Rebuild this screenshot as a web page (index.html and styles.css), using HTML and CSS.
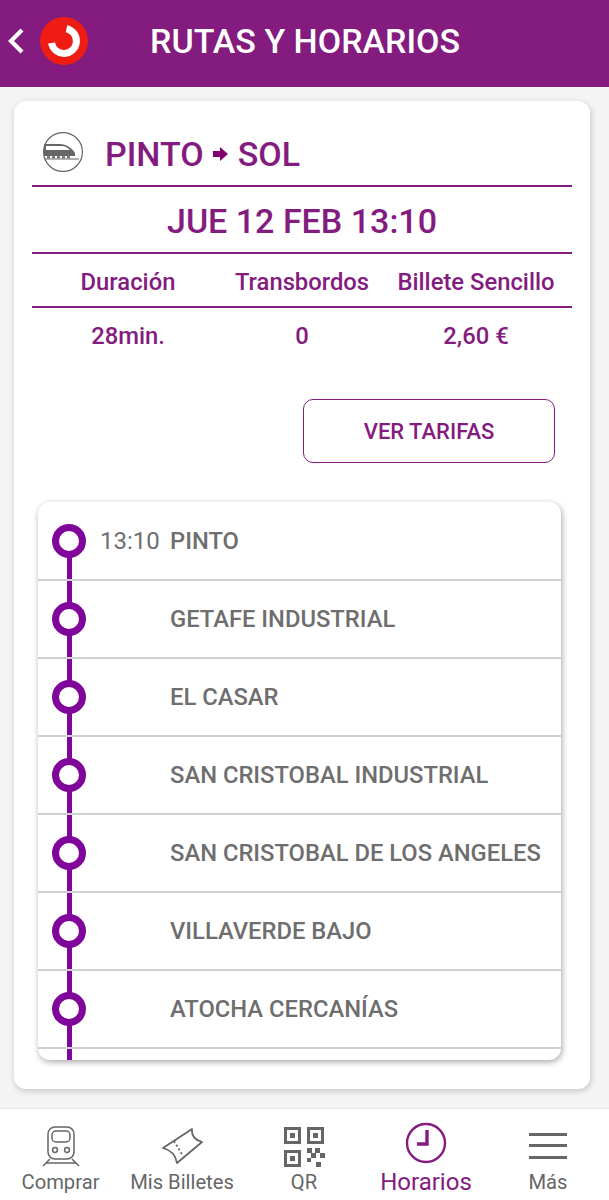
FILE: index.html
```html
<!DOCTYPE html>
<html lang="es">
<head>
  <meta charset="UTF-8">
  <meta name="viewport" content="width=device-width, initial-scale=1.0">
  <title>Rutas y horarios</title>
  <link rel="stylesheet" href="styles.css">
</head>
<body>
  <header class="top-bar">
    <svg class="back-icon" width="17" height="28" viewBox="0 0 17 28"><path d="M15 3 L4 14 L15 25" fill="none" stroke="#fff" stroke-width="4.2"/></svg>
    <svg class="logo" width="48" height="48" viewBox="0 0 48 48">
      <circle cx="24" cy="24" r="24" fill="#ee1c12"/>
      <path d="M26.5 11.7 A12.5 12.5 0 1 1 11.6 26" fill="none" stroke="#fff" stroke-width="7"/>
    </svg>
    <h1 class="page-title">RUTAS Y HORARIOS</h1>
  </header>

  <main class="content">
    <section class="route-card">
      <div class="route-head">
        <svg class="route-icon" width="40" height="40" viewBox="0 0 40 40">
          <circle cx="20" cy="20" r="19.4" fill="#fff" stroke="#666" stroke-width="1.2"/>
          <path d="M1 12 H17 C23 12 29 16 32 21 V24 H1 Z" fill="#666"/>
          <path d="M3 14 H19 C22 14 25 16 27 18 H3 Z" fill="#fff"/>
          <path d="M2 27 H36" stroke="#666" stroke-width="1.2"/>
          <path d="M4 25.2 H27" stroke="#666" stroke-width="2" stroke-dasharray="3 2"/>
        </svg>
        <h2 class="route-name">PINTO
          <svg class="route-arrow" width="16" height="14" viewBox="0 0 16 14"><path d="M0 4 H7 V0 L15 7 L7 14 V10 H0 Z" fill="#80006f"/></svg>
          SOL</h2>
      </div>
      <div class="route-date">JUE 12 FEB 13:10</div>
      <div class="info-grid info-labels">
        <span>Duración</span>
        <span>Transbordos</span>
        <span>Billete Sencillo</span>
      </div>
      <div class="info-grid info-values">
        <span>28min.</span>
        <span>0</span>
        <span>2,60 €</span>
      </div>
      <div class="fare-row">
        <button class="fare-button">VER TARIFAS</button>
      </div>

      <ul class="stops">
        <li class="stop"><span class="stop-mark"></span><span class="stop-time">13:10</span><span class="stop-name">PINTO</span></li>
        <li class="stop"><span class="stop-mark"></span><span class="stop-time"></span><span class="stop-name">GETAFE INDUSTRIAL</span></li>
        <li class="stop"><span class="stop-mark"></span><span class="stop-time"></span><span class="stop-name">EL CASAR</span></li>
        <li class="stop"><span class="stop-mark"></span><span class="stop-time"></span><span class="stop-name">SAN CRISTOBAL INDUSTRIAL</span></li>
        <li class="stop"><span class="stop-mark"></span><span class="stop-time"></span><span class="stop-name">SAN CRISTOBAL DE LOS ANGELES</span></li>
        <li class="stop"><span class="stop-mark"></span><span class="stop-time"></span><span class="stop-name">VILLAVERDE BAJO</span></li>
        <li class="stop"><span class="stop-mark"></span><span class="stop-time"></span><span class="stop-name">ATOCHA CERCANÍAS</span></li>
      </ul>
    </section>
  </main>

  <nav class="tab-bar">
    <a class="tab">
      <svg width="40" height="42" viewBox="0 0 40 42" fill="none" stroke="#666" stroke-width="1.5">
        <rect x="7" y="1" width="26" height="32" rx="7"/>
        <rect x="11" y="5" width="18" height="11" rx="4"/>
        <circle cx="14" cy="24" r="2.4"/>
        <circle cx="26" cy="24" r="2.4"/>
        <path d="M9 33 L2 40 M31 33 L38 40 M5 37 H35"/>
      </svg>
      <span>Comprar</span>
    </a>
    <a class="tab">
      <svg width="42" height="42" viewBox="0 0 42 42" fill="none" stroke="#666" stroke-width="1.8" stroke-linejoin="round">
        <path d="M2 22 L31 3 Q30 13 41 16 L16 37 Q14 25 2 22 Z"/>
        <path d="M13 15 L22 30" stroke-dasharray="2 2.4"/>
      </svg>
      <span>Mis Billetes</span>
    </a>
    <a class="tab">
      <svg width="42" height="42" viewBox="0 0 42 42" fill="#666">
        <path fill-rule="evenodd" d="M1 1 H18 V18 H1 Z M4 4 V15 H15 V4 Z M7 7 H12 V12 H7 Z"/>
        <path fill-rule="evenodd" d="M24 1 H41 V18 H24 Z M27 4 V15 H38 V4 Z M30 7 H35 V12 H30 Z"/>
        <path fill-rule="evenodd" d="M1 24 H18 V41 H1 Z M4 27 V38 H15 V27 Z M7 30 H12 V35 H7 Z"/>
        <path d="M24 22 H29 V27 H24 Z M32 22 H37 V27 H32 Z M28 27 H33 V32 H28 Z M37 27 H42 V32 H37 Z M24 32 H28 V36 H24 Z M33 36 H38 V41 H33 Z"/>
      </svg>
      <span>QR</span>
    </a>
    <a class="tab tab-active">
      <svg width="42" height="42" viewBox="0 0 42 42" fill="none" stroke="#841b7e" stroke-width="2.4">
        <circle cx="21" cy="21" r="19"/>
        <path d="M22 8 V22 H12" stroke-width="3.4"/>
      </svg>
      <span>Horarios</span>
    </a>
    <a class="tab">
      <svg width="40" height="42" viewBox="0 0 40 42" fill="#666">
        <rect x="1" y="7" width="38" height="3"/>
        <rect x="1" y="18" width="38" height="3"/>
        <rect x="1" y="30" width="38" height="3"/>
      </svg>
      <span>Más</span>
    </a>
  </nav>
</body>
</html>
```

FILE: styles.css
```css
* {
  box-sizing: border-box;
}

body {
  margin: 0;
  height: 1200px;
  overflow: hidden;
  display: flex;
  flex-direction: column;
  background: #f4f4f4;
  font-family: Roboto, sans-serif;
}

.top-bar {
  height: 87px;
  background: #841b7e;
  display: flex;
  align-items: center;
  padding: 0 0 6px 7px;
}

.back-icon {
  margin-right: 16px;
  flex: none;
}

.logo {
  margin-right: 62px;
  flex: none;
}

.page-title {
  margin: 0;
  color: #fff;
  font-size: 34px;
  font-weight: 500;
}

.content {
  flex: 1;
  padding: 14px 19px 19px 14px;
}

.route-card {
  height: 988px;
  background: #fff;
  border-radius: 12px;
  box-shadow: 1px 2px 6px rgba(0,0,0,0.2);
  padding: 0 18px;
}

.route-head {
  height: 86px;
  border-bottom: 2px solid #841b7e;
  display: flex;
  align-items: center;
  padding: 18px 0 0 11px;
}

.route-icon {
  flex: none;
  margin-right: 22px;
}

.route-name {
  margin: 4px 0 0;
  color: #841b7e;
  font-size: 34px;
  font-weight: 500;
  display: flex;
  align-items: center;
  gap: 9px;
}

.route-date {
  height: 67px;
  padding-top: 2px;
  border-bottom: 2px solid #841b7e;
  color: #841b7e;
  font-size: 34px;
  font-weight: 500;
  display: flex;
  align-items: center;
  justify-content: center;
}

.info-grid {
  display: grid;
  grid-template-columns: 192px 156px 1fr;
  color: #841b7e;
  font-size: 23.8px;
  font-weight: 500;
  text-align: center;
  align-items: center;
}

.info-labels {
  height: 54px;
  padding-top: 3px;
  border-bottom: 2px solid #841b7e;
}

.info-values {
  height: 56px;
}

.fare-row {
  display: flex;
  justify-content: flex-end;
  padding: 35px 17px 39px 0;
}

.fare-button {
  width: 252px;
  height: 64px;
  background: #fff;
  border: 1px solid #841b7e;
  border-radius: 10px;
  color: #841b7e;
  font-family: Roboto, sans-serif;
  font-size: 22px;
  font-weight: 500;
}

.stops {
  list-style: none;
  margin: 0 11px 0 6px;
  padding: 1px 0 0;
  height: 558px;
  background: #fff;
  border-radius: 12px;
  box-shadow: 1px 2px 6px rgba(0,0,0,0.35);
  overflow: hidden;
}

/* tail of the line under the last stop */
.stops::after {
  content: "";
  display: block;
  width: 5px;
  height: 12px;
  margin-left: 29px;
  background: #80059a;
}

.stop {
  height: 78px;
  border-bottom: 2px solid #d0d0d0;
  display: flex;
  align-items: center;
  position: relative;
}

.stop-mark {
  width: 34px;
  height: 34px;
  margin-left: 14px;
  border: 7px solid #80059a;
  border-radius: 50%;
  background: #fff;
  flex: none;
  z-index: 1;
}

/* line behind the ring, stops at the separator */
.stop::after {
  content: "";
  position: absolute;
  left: 29px;
  top: 0;
  bottom: 0;
  width: 5px;
  background: #80059a;
}

.stop:first-child::after {
  top: 38px;
}

.stop-time {
  width: 70px;
  margin-left: 14px;
  color: #6e6e6e;
  font-size: 24px;
  flex: none;
}

.stop-name {
  color: #6e6e6e;
  font-size: 23.75px;
  font-weight: 500;
}

.tab-bar {
  height: 92px;
  background: #fff;
  border-top: 1px solid #e6e6e6;
  display: grid;
  grid-template-columns: 121px 122px 122px 122px 122px;
}

.tab {
  display: flex;
  flex-direction: column;
  align-items: center;
  padding-top: 17px;
  color: #666;
  font-size: 20.2px;
}

.tab svg {
  margin-bottom: 2px;
}

.tab-active {
  color: #841b7e;
  font-size: 24px;
  padding-top: 13px;
}

.tab-active svg {
  margin-bottom: 4px;
}
```
